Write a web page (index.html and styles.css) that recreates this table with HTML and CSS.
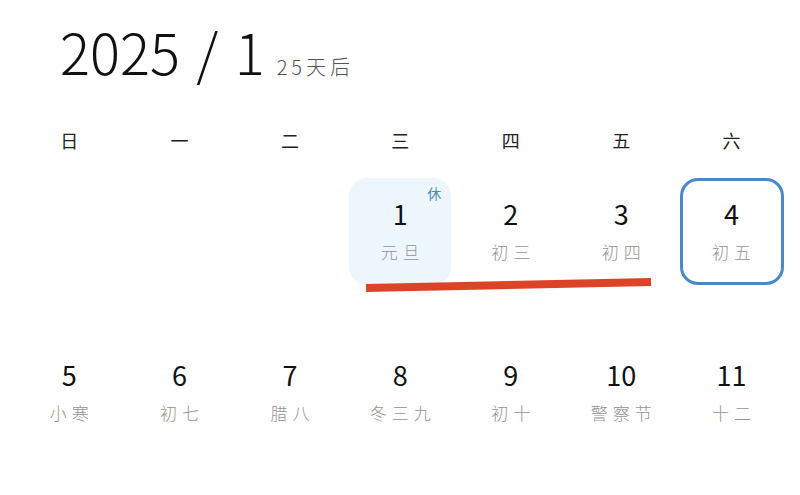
FILE: index.html
```html
<!DOCTYPE html>
<html lang="zh-CN">
<head>
<meta charset="utf-8">
<link rel="stylesheet" href="styles.css">
</head>
<body>
<div class="page">
  <header class="title">
    <span class="ym">2025 / 1</span>
    <span class="after">25天后</span>
  </header>
  <div class="weekdays">
    <span>日</span><span>一</span><span>二</span><span>三</span><span>四</span><span>五</span><span>六</span>
  </div>
  <div class="grid">
    <div class="cell empty"></div>
    <div class="cell empty"></div>
    <div class="cell empty"></div>
    <div class="cell holiday"><span class="rest">休</span><span class="num">1</span><span class="lunar">元旦</span></div>
    <div class="cell"><span class="num">2</span><span class="lunar">初三</span></div>
    <div class="cell"><span class="num">3</span><span class="lunar">初四</span></div>
    <div class="cell today"><span class="num">4</span><span class="lunar">初五</span></div>
    <div class="cell"><span class="num">5</span><span class="lunar">小寒</span></div>
    <div class="cell"><span class="num">6</span><span class="lunar">初七</span></div>
    <div class="cell"><span class="num">7</span><span class="lunar">腊八</span></div>
    <div class="cell"><span class="num">8</span><span class="lunar">冬三九</span></div>
    <div class="cell"><span class="num">9</span><span class="lunar">初十</span></div>
    <div class="cell"><span class="num">10</span><span class="lunar">警察节</span></div>
    <div class="cell"><span class="num">11</span><span class="lunar">十二</span></div>
    <div class="strike"></div>
  </div>
</div>
</body>
</html>
```

FILE: styles.css
```css
html, body {
  margin: 0;
  padding: 0;
  background: #ffffff;
}
body {
  width: 800px;
  height: 495px;
  overflow: hidden;
  font-family: "Noto Sans CJK SC", "Noto Sans", sans-serif;
  color: #111;
}
.page {
  padding: 23px 14px 0 14px;
}
.title {
  display: flex;
  align-items: baseline;
  padding-left: 46px;
  height: 56px;
}
.ym {
  font-size: 56px;
  line-height: 56px;
  font-weight: 300;
  color: #111;
  white-space: pre;
  word-spacing: 4px;
}
.after {
  margin-left: 12px;
  font-size: 20px;
  color: #555;
  letter-spacing: 4px;
  font-weight: 300;
}
.weekdays {
  margin-top: 49px;
  display: grid;
  grid-template-columns: repeat(7, 110.4px);
  height: 24px;
}
.weekdays span {
  text-align: center;
  font-size: 18px;
  line-height: 24px;
  color: #222;
}
.grid {
  position: relative;
  margin-top: 26px;
  display: grid;
  grid-template-columns: repeat(7, 110.4px);
  grid-auto-rows: 107px;
  row-gap: 54px;
}
.cell {
  position: relative;
  width: 102px;
  justify-self: center;
  box-sizing: border-box;
  display: flex;
  flex-direction: column;
  align-items: center;
  padding-top: 21px;
  border-radius: 18px;
}
.num {
  font-size: 27px;
  line-height: 30px;
  font-weight: 400;
  color: #111;
}
.lunar {
  margin-top: 11px;
  font-size: 17px;
  line-height: 24px;
  letter-spacing: 5px;
  margin-right: -5px;
  color: #949494;
  font-weight: 300;
}
.holiday {
  background: #eef6fd;
}
.rest {
  position: absolute;
  top: 6px;
  right: 10px;
  font-size: 14px;
  line-height: 18px;
  color: #4a8db0;
}
.today {
  border: 3px solid #4a88cc;
  padding-top: 18px;
  width: 104px;
}
.strike {
  position: absolute;
  left: 352px;
  top: 106px;
  width: 285px;
  height: 8px;
  background: #dd4327;
  transform: rotate(-1.2deg);
  transform-origin: left center;
}
```
